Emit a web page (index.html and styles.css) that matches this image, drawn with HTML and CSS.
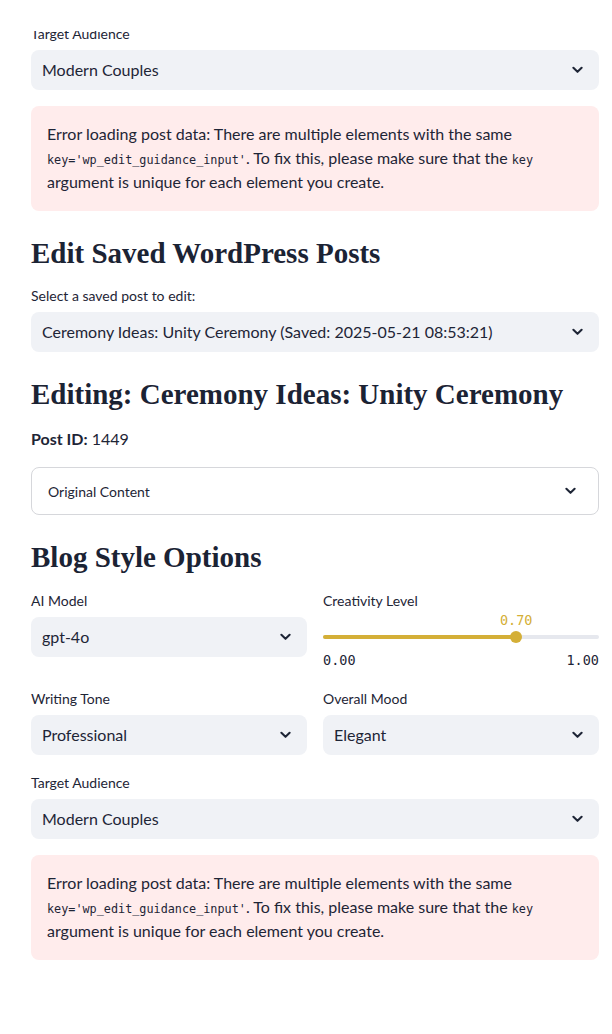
FILE: index.html
```html
<!DOCTYPE html>
<html>
<head>
<meta charset="utf-8">
<link rel="stylesheet" href="styles.css">
</head>
<body>
<div class="topbar"></div>
<main class="main">
  <div class="widget">
    <div class="label">Target Audience</div>
    <div class="select"><span>Modern Couples</span><svg class="chev" viewBox="0 0 12 8"><path d="M1.5 1.5 L6 6 L10.5 1.5"/></svg></div>
  </div>
  <div class="alert">Error loading post data: There are multiple elements with the same <code>key='wp_edit_guidance_input'</code>. To fix this, please make sure that the <code>key</code> argument is unique for each element you create.</div>
  <h2 class="h2">Edit Saved WordPress Posts</h2>
  <div class="widget">
    <div class="label">Select a saved post to edit:</div>
    <div class="select"><span>Ceremony Ideas: Unity Ceremony (Saved: 2025-05-21 08:53:21)</span><svg class="chev" viewBox="0 0 12 8"><path d="M1.5 1.5 L6 6 L10.5 1.5"/></svg></div>
  </div>
  <h2 class="h2">Editing: Ceremony Ideas: Unity Ceremony</h2>
  <p class="text"><strong>Post ID:</strong> 1449</p>
  <div class="expander"><span>Original Content</span><svg class="chev" viewBox="0 0 12 8"><path d="M1.5 1.5 L6 6 L10.5 1.5"/></svg></div>
  <h2 class="h2 h2-section">Blog Style Options</h2>
  <div class="cols">
    <div class="widget">
      <div class="label">AI Model</div>
      <div class="select"><span>gpt-4o</span><svg class="chev" viewBox="0 0 12 8"><path d="M1.5 1.5 L6 6 L10.5 1.5"/></svg></div>
    </div>
    <div class="widget">
      <div class="label">Creativity Level</div>
      <div class="slider">
        <div class="track-wrap">
          <div class="track"><div class="fill" style="width:70%"></div></div>
          <div class="thumb" style="left:70%"><span class="val">0.70</span></div>
        </div>
        <div class="ticks"><span>0.00</span><span>1.00</span></div>
      </div>
    </div>
  </div>
  <div class="cols cols-last">
    <div class="widget">
      <div class="label">Writing Tone</div>
      <div class="select"><span>Professional</span><svg class="chev" viewBox="0 0 12 8"><path d="M1.5 1.5 L6 6 L10.5 1.5"/></svg></div>
    </div>
    <div class="widget">
      <div class="label">Overall Mood</div>
      <div class="select"><span>Elegant</span><svg class="chev" viewBox="0 0 12 8"><path d="M1.5 1.5 L6 6 L10.5 1.5"/></svg></div>
    </div>
  </div>
  <div class="widget">
    <div class="label">Target Audience</div>
    <div class="select"><span>Modern Couples</span><svg class="chev" viewBox="0 0 12 8"><path d="M1.5 1.5 L6 6 L10.5 1.5"/></svg></div>
  </div>
  <div class="alert">Error loading post data: There are multiple elements with the same <code>key='wp_edit_guidance_input'</code>. To fix this, please make sure that the <code>key</code> argument is unique for each element you create.</div>
</main>
</body>
</html>
```
FILE: styles.css
```css
html, body {
  margin: 0;
  padding: 0;
  background: #ffffff;
}
body {
  font-family: Lato, "Noto Sans", sans-serif;
  color: #1e2536;
  font-size: 16px;
}
.topbar {
  position: fixed;
  top: 0;
  left: 0;
  right: 0;
  height: 31px;
  background: #ffffff;
  z-index: 10;
}
.main {
  width: 568px;
  margin: 0 0 0 31px;
  padding: 24px 0 60px;
  display: flex;
  flex-direction: column;
  gap: 16px;
}
.widget {
  display: flex;
  flex-direction: column;
  min-width: 0;
}
.label {
  font-size: 14px;
  line-height: 18px;
  padding-top: 1px;
  margin-bottom: 7px;
}
.select {
  height: 40px;
  background: #f0f2f6;
  border-radius: 8px;
  display: flex;
  align-items: center;
  justify-content: space-between;
  padding: 0 16px 1px 11px;
  font-size: 16px;
  box-sizing: border-box;
}
.chev {
  width: 11px;
  height: 8px;
  flex: none;
}
.chev path {
  fill: none;
  stroke: #1e2536;
  stroke-width: 2.2;
  stroke-linecap: round;
  stroke-linejoin: round;
}
.alert {
  background: #ffecec;
  border-radius: 8px;
  padding: 16px 16px 17px;
  line-height: 24px;
  font-size: 16px;
}
.alert code {
  font-family: "DejaVu Sans Mono", monospace;
  font-size: 11.8px;
  line-height: 14px;
}
.h2 {
  margin: 0;
  padding-top: 10px;
  font-family: "Liberation Serif", serif;
  font-weight: 700;
  font-size: 29px;
  line-height: 33px;
  color: #1b2334;
}
.h2-section {
  padding-bottom: 1px;
}
.text {
  margin: 0;
  line-height: 24px;
}
.expander {
  height: 48px;
  box-sizing: border-box;
  border: 1px solid #d6d7db;
  border-radius: 8px;
  display: flex;
  align-items: center;
  justify-content: space-between;
  padding: 0 22px 0 16px;
  font-size: 14px;
}
.cols {
  display: grid;
  grid-template-columns: 1fr 1fr;
  gap: 16px;
}
.cols-last {
  margin-bottom: 2px;
}
.slider {
  padding-top: 12px;
}
.track-wrap {
  position: relative;
  height: 16px;
  display: flex;
  align-items: center;
}
.track {
  width: 100%;
  height: 4px;
  border-radius: 2px;
  background: #e6e8ee;
}
.fill {
  height: 100%;
  border-radius: 2px;
  background: #d4af37;
}
.thumb {
  position: absolute;
  top: 2px;
  width: 12px;
  height: 12px;
  margin-left: -6px;
  border-radius: 50%;
  background: #d4af37;
}
.val {
  position: absolute;
  bottom: 15px;
  left: 50%;
  transform: translateX(-50%);
  font-family: "DejaVu Sans Mono", monospace;
  font-size: 13.5px;
  color: #d4af37;
  line-height: 16px;
}
.ticks {
  display: flex;
  justify-content: space-between;
  font-family: "DejaVu Sans Mono", monospace;
  font-size: 13.5px;
  line-height: 20px;
  padding-top: 5px;
  padding-bottom: 3px;
}
```
